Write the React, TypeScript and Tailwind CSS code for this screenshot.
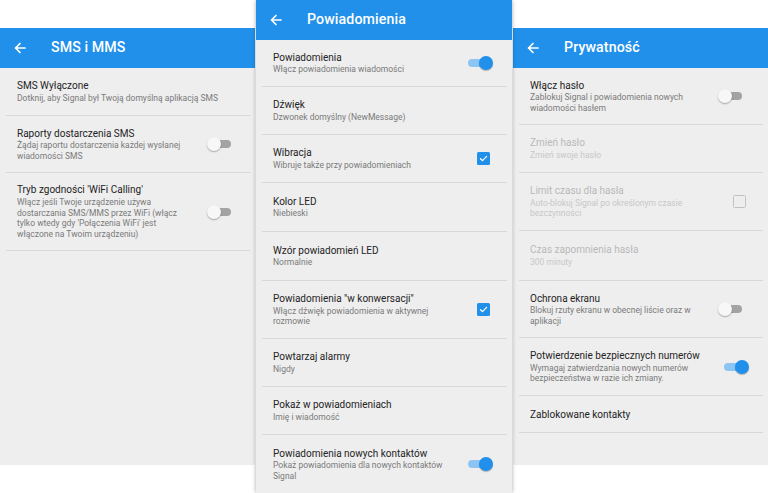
import React from "react";

const FONT = { fontFamily: "Roboto, 'Noto Sans', sans-serif" };

function BackArrow() {
  return (
    <svg width="12" height="12" viewBox="0 0 12 12" fill="none" stroke="white" strokeWidth="1.7" strokeLinecap="round" strokeLinejoin="round">
      <path d="M11 6H1.5M6 1.5L1.5 6 6 10.5" />
    </svg>
  );
}

function Header({ title }: { title: string }) {
  return (
    <div className="h-[40px] shrink-0 bg-[#2190ea] flex items-center text-white">
      <div className="ml-[14px]">
        <BackArrow />
      </div>
      <div className="ml-[25px] text-[14.2px] font-medium tracking-[0.1px]">{title}</div>
    </div>
  );
}

function Toggle({ on }: { on: boolean }) {
  if (on) {
    return (
      <div className="relative w-[25px] h-[14px]">
        <div className="absolute left-0 top-[3px] w-[22px] h-[8px] rounded-full bg-[#8cc5f3]" />
        <div className="absolute right-0 top-0 w-[14px] h-[14px] rounded-full bg-[#2190ea] shadow-[0_1px_1px_rgba(0,0,0,0.25)]" />
      </div>
    );
  }
  return (
    <div className="relative w-[25px] h-[14px]">
      <div className="absolute right-[1px] top-[3px] w-[21px] h-[8px] rounded-full bg-[#a3a3a3]" />
      <div className="absolute left-0 top-0 w-[14px] h-[14px] rounded-full bg-[#f7f7f7] shadow-[0_1px_1.5px_rgba(0,0,0,0.3)]" />
    </div>
  );
}

function Check({ checked }: { checked: boolean }) {
  if (!checked) {
    return <div className="w-[13px] h-[13px] rounded-[1.5px] border-[1.5px] border-[#c2c2c2]" />;
  }
  return (
    <div className="w-[13px] h-[13px] rounded-[1.5px] bg-[#2190ea] flex items-center justify-center">
      <svg width="9" height="9" viewBox="0 0 9 9" fill="none" stroke="white" strokeWidth="1.3" strokeLinecap="round" strokeLinejoin="round">
        <path d="M1.5 4.7L3.5 6.6 7.6 2.4" />
      </svg>
    </div>
  );
}

type RowProps = {
  h: string;
  title: string;
  sub?: React.ReactNode;
  control?: React.ReactNode;
  ctrlPad?: string;
  disabled?: boolean;
  last?: boolean;
};

function Row({ h, title, sub, control, ctrlPad = "pr-[14px]", disabled, last }: RowProps) {
  return (
    <div className={`${h} shrink-0 ml-[6px] mr-[5px] flex items-center ${last ? "" : "border-b border-[#d8d8d8]"}`}>
      <div className="flex-1 pl-[11px]">
        <div className={`text-[10px] leading-[13px] ${disabled ? "text-[#b9b9b9]" : "text-[#232323]"}`}>{title}</div>
        {sub && (
          <div className={`text-[8.5px] leading-[10.7px] mt-[0.5px] ${disabled ? "text-[#c8c8c8]" : "text-[#7a7a7a]"}`}>{sub}</div>
        )}
      </div>
      {control && <div className={ctrlPad}>{control}</div>}
    </div>
  );
}

export default function App() {
  return (
    <div className="w-[768px] h-[493px] bg-white flex items-start overflow-hidden" style={FONT}>
      {/* SMS i MMS */}
      <div className="w-[255px] mt-[28px] h-[437px] bg-[#eeeeee] flex flex-col">
        <Header title="SMS i MMS" />
        <Row h="h-[48px]" title="SMS Wyłączone" sub="Dotknij, aby Signal był Twoją domyślną aplikacją SMS" />
        <Row
          h="h-[57px]"
          title="Raporty dostarczenia SMS"
          sub={<>Żądaj raportu dostarczenia każdej wysłanej<br />wiadomości SMS</>}
          control={<Toggle on={false} />}
          ctrlPad="pr-[18px]"
        />
        <Row
          h="h-[78px]"
          title="Tryb zgodności 'WiFi Calling'"
          sub={
            <>
              Włącz jeśli Twoje urządzenie używa
              <br />
              dostarczania SMS/MMS przez WiFi (włącz
              <br />
              tylko wtedy gdy 'Połączenia WiFi' jest
              <br />
              włączone na Twoim urządzeniu)
            </>
          }
          control={<Toggle on={false} />}
          ctrlPad="pr-[18px]"
        />
      </div>

      {/* Powiadomienia */}
      <div className="w-[256px] ml-[1px] h-[493px] bg-[#eeeeee] flex flex-col relative z-10 shadow-[0_0_4px_rgba(0,0,0,0.35)]">
        <Header title="Powiadomienia" />
        <Row h="h-[47px]" title="Powiadomienia" sub="Włącz powiadomienia wiadomości" control={<Toggle on />} ctrlPad="pr-[14px]" />
        <Row h="h-[48px]" title="Dźwięk" sub="Dzwonek domyślny (NewMessage)" />
        <Row h="h-[48px]" title="Wibracja" sub="Wibruje także przy powiadomieniach" control={<Check checked />} ctrlPad="pr-[17px]" />
        <Row h="h-[49px]" title="Kolor LED" sub="Niebieski" />
        <Row h="h-[49px]" title="Wzór powiadomień LED" sub="Normalnie" />
        <Row
          h="h-[58px]"
          title={'Powiadomienia "w konwersacji"'}
          sub={<>Włącz dźwięk powiadomienia w aktywnej<br />rozmowie</>}
          control={<Check checked />}
          ctrlPad="pr-[17px]"
        />
        <Row h="h-[48px]" title="Powtarzaj alarmy" sub="Nigdy" />
        <Row h="h-[48px]" title="Pokaż w powiadomieniach" sub="Imię i wiadomość" />
        <Row
          h="h-[58px]"
          title="Powiadomienia nowych kontaktów"
          sub={<>Pokaż powiadomienia dla nowych kontaktów<br />Signal</>}
          control={<Toggle on />}
          ctrlPad="pr-[14px]"
          last
        />
      </div>

      {/* Prywatność */}
      <div className="flex-1 ml-[1px] mt-[28px] h-[437px] bg-[#eeeeee] flex flex-col">
        <Header title="Prywatność" />
        <Row
          h="h-[57px]"
          title="Włącz hasło"
          sub={<>Zablokuj Signal i powiadomienia nowych<br />wiadomości hasłem</>}
          control={<Toggle on={false} />}
          ctrlPad="pr-[20px]"
        />
        <Row h="h-[48px]" title="Zmień hasło" sub="Zmień swoje hasło" disabled />
        <Row
          h="h-[58px]"
          title="Limit czasu dla hasła"
          sub={<>Auto-blokuj Signal po określonym czasie<br />bezczynności</>}
          control={<Check checked={false} />}
          ctrlPad="pr-[17px]"
          disabled
        />
        <Row h="h-[50px]" title="Czas zapomnienia hasła" sub="300 minuty" disabled />
        <Row
          h="h-[57px]"
          title="Ochrona ekranu"
          sub={<>Blokuj rzuty ekranu w obecnej liście oraz w<br />aplikacji</>}
          control={<Toggle on={false} />}
          ctrlPad="pr-[20px]"
        />
        <Row
          h="h-[58px]"
          title="Potwierdzenie bezpiecznych numerów"
          sub={<>Wymagaj zatwierdzania nowych numerów<br />bezpieczeństwa w razie ich zmiany.</>}
          control={<Toggle on />}
          ctrlPad="pr-[14px]"
        />
        <Row h="h-[37px]" title="Zablokowane kontakty" />
      </div>
    </div>
  );
}
